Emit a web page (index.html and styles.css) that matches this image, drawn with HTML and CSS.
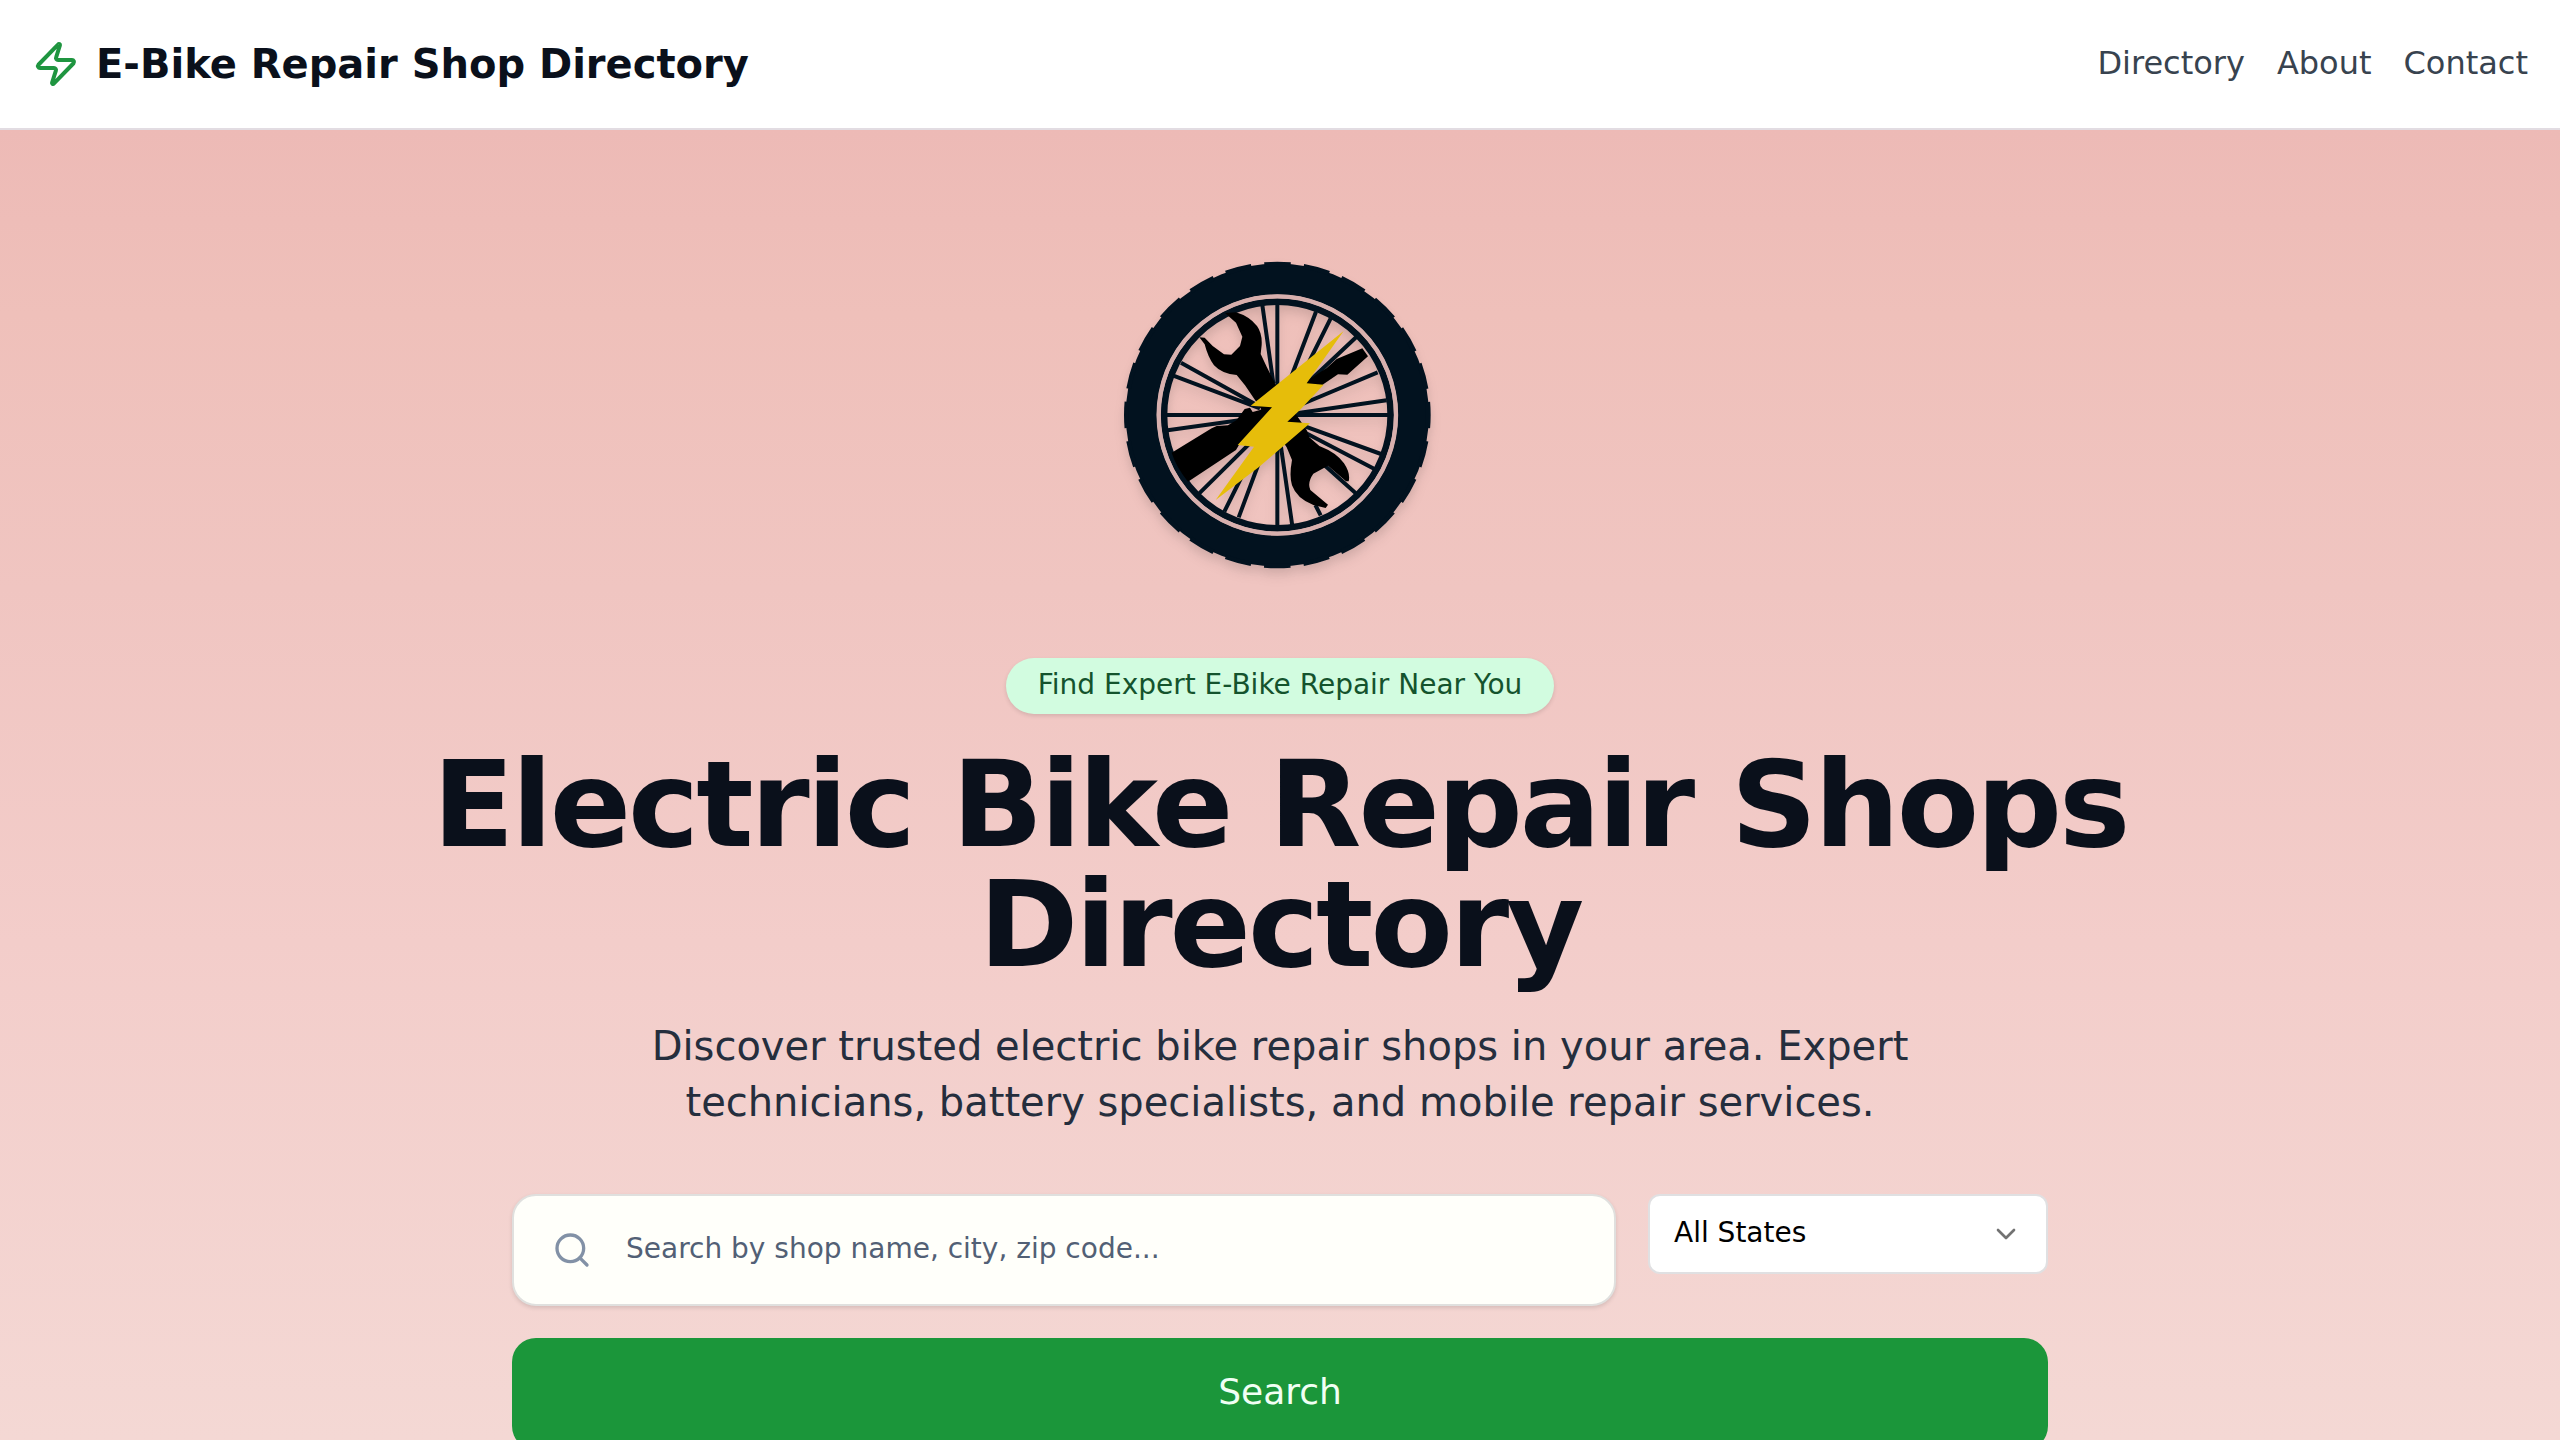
FILE: index.html
```html
<!DOCTYPE html>
<html lang="en">
<head>
    <meta charset="UTF-8">
    <meta name="viewport" content="width=device-width, initial-scale=1.0">
    <title>E-Bike Repair Shop Directory</title>
    <link rel="stylesheet" href="styles.css">
</head>
<body>
    <header class="site-header">
        <a class="brand" href="#">
            <svg class="brand-icon" viewBox="0 0 24 24" fill="none" stroke="currentColor" stroke-width="2" stroke-linecap="round" stroke-linejoin="round">
                <path d="M4 14a1 1 0 0 1-.78-1.63l9.9-10.2a.5.5 0 0 1 .86.46l-1.92 6.02A1 1 0 0 0 13 10h7a1 1 0 0 1 .78 1.63l-9.9 10.2a.5.5 0 0 1-.86-.46l1.92-6.02A1 1 0 0 0 11 14z"/>
            </svg>
            <span>E-Bike Repair Shop Directory</span>
        </a>
        <nav class="site-nav">
            <a href="#">Directory</a>
            <a href="#">About</a>
            <a href="#">Contact</a>
        </nav>
    </header>

    <main class="hero">
        <svg class="logo" viewBox="60 45 960 960">
            <!-- tyre and tread -->
            <g fill="none" stroke="#02121f">
                <circle cx="532" cy="525" r="408" stroke-width="93"/>
                <circle cx="532" cy="525" r="453" stroke-width="14" pathLength="360" stroke-dasharray="10 5" stroke-dashoffset="5"/>
                <circle cx="532" cy="525" r="340" stroke-width="20"/>
            </g>
            <circle cx="532" cy="525" r="356" fill="none" stroke="#d8b0ae" stroke-width="13"/>
            <!-- spokes -->
            <path class="spokes" d="M532 190V860M200 525H865M487 195L520 430M648 215L570 420M692 235L600 420M769 291L600 450M833 397L600 495M860 481L590 520M843 642L590 550M822 686L590 565M769 761L650 655M662 826L646 795M577 858L540 600M416 832L480 660M373 815L450 660M297 761L470 590M203 571L440 538M220 407L480 505M243 368L480 500"/>
            <!-- wrench -->
            <path d="M375 219L408 217Q448 229 471 258Q487 280 485 315L482 342L500 380L526 432L620 570L628 592L658 618Q710 638 732 670Q752 700 746 724L738 724L684 677L640 701Q621 728 631 750L684 794L677 804L640 795Q590 776 576 736Q567 708 576 660L560 622L465 480L435 436L410 405Q366 402 342 376Q324 352 314 313L298 292L314 293L338 318L372 343L394 344L420 318L427 290L408 248Z"/>
            <!-- screwdriver -->
            <path d="M787 325L804 349L742 404L714 403L672 431L530 540L420 610L408 630L264 725Q228 680 215 638L335 565L350 558L384 556L410 540L434 507L450 503L458 516L480 510L640 410L680 384L710 357Z"/>
            <path d="M565 547L594 533L596 548L630 552Z"/>
            <path fill="#e6bd0a" d="M731 273L579 395L452 497L516 502L413 615L462 620L347 780L476 682L630 550L562 545L600 510L671 434L620 430Z"/>
        </svg>

        <p class="tagline">Find Expert E-Bike Repair Near You</p>
        <h1>Electric Bike Repair Shops Directory</h1>
        <p class="intro">Discover trusted electric bike repair shops in your area. Expert technicians, battery specialists, and mobile repair services.</p>

        <form class="search-form">
            <div class="search-box">
                <svg class="search-icon" viewBox="0 0 24 24" fill="none" stroke="currentColor" stroke-width="2" stroke-linecap="round" stroke-linejoin="round">
                    <circle cx="11" cy="11" r="8"/>
                    <path d="m21 21-4.3-4.3"/>
                </svg>
                <input type="text" placeholder="Search by shop name, city, zip code...">
            </div>
            <button type="button" class="state-select">
                <span>All States</span>
                <svg class="chevron" viewBox="0 0 24 24" fill="none" stroke="currentColor" stroke-width="2" stroke-linecap="round" stroke-linejoin="round">
                    <path d="m6 9 6 6 6-6"/>
                </svg>
            </button>
            <button type="button" class="search-button">Search</button>
        </form>
    </main>
</body>
</html>
```
FILE: styles.css
```css
* {
    box-sizing: border-box;
}

body {
    margin: 0;
    height: 1440px;
    overflow: hidden;
    font-family: "DejaVu Sans", sans-serif;
    color: #0a101b;
}

a {
    color: inherit;
    text-decoration: none;
}

.site-header {
    display: flex;
    align-items: center;
    justify-content: space-between;
    height: 130px;
    padding: 0 32px;
    background: #fff;
    border-bottom: 2px solid #e2dce2;
}

.brand {
    display: flex;
    align-items: center;
    gap: 16px;
    font-size: 40px;
    font-weight: bold;
}

.brand-icon {
    width: 48px;
    height: 48px;
    color: #1f9540;
}

.site-nav {
    display: flex;
    gap: 32px;
    padding-bottom: 2px;
    font-size: 32px;
    color: #38434f;
}

.hero {
    display: flex;
    flex-direction: column;
    align-items: center;
    height: 1310px;
    padding-top: 125px;
    background: linear-gradient(to bottom, #edbab6, #efc0ba 14%, #f0c5c1 35%, #f3cdca 62%, #f4d8d4);
}

.logo {
    flex: none;
    width: 320px;
    height: 320px;
    filter: drop-shadow(0 8px 6px rgba(0, 0, 0, 0.08)) drop-shadow(0 4px 4px rgba(0, 0, 0, 0.06));
}

.spokes {
    fill: none;
    stroke: #02121f;
    stroke-width: 12;
}

.tagline {
    flex: none;
    height: 56px;
    margin: 83px 0 0;
    padding: 0 32px;
    border-radius: 28px;
    background: #d2fce0;
    color: #14532d;
    font-size: 28px;
    line-height: 53px;
    box-shadow: 0 2px 4px rgba(0, 0, 0, 0.12);
}

h1 {
    width: 1792px;
    margin: 31px 0 0;
    font-size: 120px;
    line-height: 120px;
    letter-spacing: -3px;
    text-align: center;
}

.intro {
    width: 1344px;
    margin: 33px 0 0;
    color: #252e3d;
    font-size: 40px;
    line-height: 56px;
    text-align: center;
}

.search-form {
    display: grid;
    grid-template-columns: 1104px 400px;
    gap: 32px;
    align-items: start;
    margin-top: 64px;
}

.search-box {
    display: flex;
    align-items: center;
    gap: 34px;
    height: 112px;
    padding: 0 38px;
    border: 2px solid #e0e0de;
    border-radius: 24px;
    background: #fffffa;
    box-shadow: 0 2px 4px rgba(0, 0, 0, 0.12);
}

.search-icon {
    width: 40px;
    height: 40px;
    color: #8291a6;
}

.search-box input {
    flex: 1;
    padding: 0 0 3px;
    border: 0;
    outline: 0;
    background: none;
    font: 28px "DejaVu Sans", sans-serif;
}

.search-box input::placeholder {
    color: #526075;
}

.state-select {
    display: flex;
    align-items: center;
    justify-content: space-between;
    height: 80px;
    padding: 0 24px;
    border: 2px solid #e0e0e2;
    border-radius: 12px;
    background: #fff;
    color: #000;
    font: 28px "DejaVu Sans", sans-serif;
}

.state-select span {
    padding-bottom: 3px;
}

.chevron {
    width: 32px;
    height: 32px;
    opacity: 0.55;
}

.search-button {
    grid-column: 1 / -1;
    height: 112px;
    padding: 0 0 6px;
    border: 0;
    border-radius: 24px;
    background: #1b963a;
    color: #f0fff4;
    font: 36px "DejaVu Sans", sans-serif;
}
```
